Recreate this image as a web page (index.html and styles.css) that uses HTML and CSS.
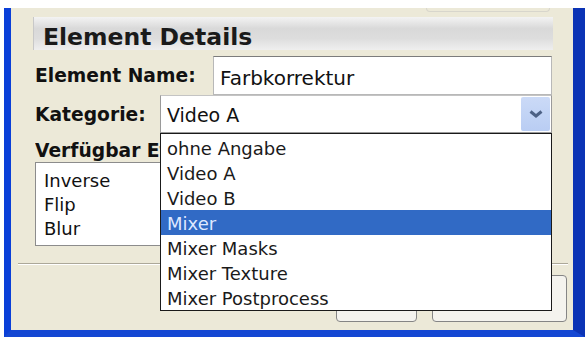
FILE: index.html
```html
<!DOCTYPE html>
<html lang="de">

<head>
  <meta charset="UTF-8">
  <meta name="viewport" content="width=device-width, initial-scale=1.0">
  <title>Element Details</title>
  <link rel="stylesheet" href="styles.css">
</head>

<body>
  <div class="window">
    <div class="topbar">
      <div class="tab-edge"></div>
    </div>
    <div class="header">Element Details</div>

    <div class="form">
      <div class="row">
        <label class="label label-name">Element Name:</label>
        <div class="textbox">Farbkorrektur</div>
      </div>
      <div class="row">
        <label class="label label-cat">Kategorie:</label>
        <div class="combo">
          <div class="combo-value">Video A</div>
          <div class="combo-button">
            <svg width="14" height="8" viewBox="0 0 14 8">
              <polyline points="1.5,1.5 7,6 12.5,1.5" fill="none" stroke="#4d6185" stroke-width="3" />
            </svg>
          </div>
          <ul class="dropdown">
            <li>ohne Angabe</li>
            <li>Video A</li>
            <li>Video B</li>
            <li class="selected">Mixer</li>
            <li>Mixer Masks</li>
            <li>Mixer Texture</li>
            <li>Mixer Postprocess</li>
          </ul>
        </div>
      </div>
      <div class="label label-avail">Verfügbar Effekte:</div>
      <ul class="listbox">
        <li>Inverse</li>
        <li>Flip</li>
        <li>Blur</li>
      </ul>
    </div>

    <div class="separator"></div>

    <div class="buttons">
      <button class="btn btn-small"></button>
      <button class="btn btn-wide"></button>
    </div>
  </div>
</body>

</html>
```

FILE: styles.css
```css
html,
body {
  margin: 0;
  background: #fff;
  overflow: hidden;
}

.window {
  margin: 8px 0 0 4px;
  background: #ece9d8;
  border-left: 7px solid #0a3fd8;
  border-right: 12px solid #0b33b5;
  border-bottom: 7px solid #1447d3;
  font-family: "DejaVu Sans", sans-serif;
  color: #111;
}

.topbar {
  height: 9px;
  display: flex;
  justify-content: flex-end;
}

.tab-edge {
  width: 122px;
  height: 3px;
  margin-right: 23px;
  border: 1px solid #d8d6cc;
  border-top: none;
  border-radius: 0 0 5px 5px;
}

.header {
  height: 33px;
  box-sizing: border-box;
  margin: 0 20px 0 22px;
  padding: 7px 0 0 9px;
  line-height: 26px;
  font-size: 23.5px;
  font-weight: bold;
  color: #1a1a1a;
  background: linear-gradient(#f3f3f3 0, #d9d9d9 35%, #dddddd 65%, #efefef 100%);
  border-left: 1px solid #c8c8c8;
}

.form {
  padding: 6px 21px 0 24px;
}

.row {
  display: flex;
  height: 39px;
}

.label {
  font-size: 18.7px;
  font-weight: bold;
  line-height: 39px;
  white-space: nowrap;
}

.label-name {
  width: 178px;
}

.label-cat {
  width: 125px;
}

/* the open dropdown hides the rest of this label */
.label-avail {
  width: 125px;
  overflow: hidden;
  margin-top: 6px;
  line-height: 22px;
}

.textbox {
  flex: 1;
  box-sizing: border-box;
  height: 39px;
  padding: 6px 0 0 6px;
  line-height: 30px;
  font-size: 20px;
  background: #fff;
  border: 1px solid #b8b8b8;
  border-top-color: #7c7c7c;
}

.combo {
  flex: 1;
  position: relative;
  display: flex;
  box-sizing: border-box;
  height: 38px;
  background: #fff;
  border: 1px solid #9a9a9a;
  border-top-color: #c4c4c4;
}

.combo-value {
  flex: 1;
  padding: 3px 0 0 6px;
  line-height: 33px;
  font-size: 19px;
}

.combo-button {
  width: 29px;
  margin: 1px;
  display: flex;
  align-items: center;
  justify-content: center;
  background: linear-gradient(#cbdaf7, #b9cdf3);
  border-radius: 2px;
}

.dropdown {
  position: absolute;
  top: calc(100% + 1px);
  left: -1px;
  width: 392px;
  box-sizing: border-box;
  margin: 0;
  padding: 1px 0 0;
  list-style: none;
  background: #fff;
  border: 1px solid #1a1a1a;
  z-index: 10;
}

.dropdown li {
  height: 25px;
  line-height: 27px;
  padding-left: 6px;
  font-size: 18px;
  color: #1a1a1a;
}

.dropdown li.selected {
  background: #316ac5;
  color: #dfe8ff;
}

.listbox {
  width: 270px;
  height: 84px;
  box-sizing: border-box;
  margin: 0;
  padding: 6px 0 0 8px;
  list-style: none;
  background: #fff;
  border: 1px solid #8c8c8c;
  font-size: 18px;
  line-height: 24px;
}

.separator {
  margin: 17px 5px 0 7px;
  border-top: 1px solid #aca899;
  border-bottom: 1px solid #fff;
}

.buttons {
  display: flex;
  justify-content: flex-end;
  gap: 15px;
  padding: 10px 6px 8px 0;
}

.btn {
  height: 47px;
  background: #f4f3ee;
  border: 1px solid #858585;
  border-radius: 4px;
  padding: 0;
}

.btn-small {
  width: 81px;
}

.btn-wide {
  width: 135px;
}
```
